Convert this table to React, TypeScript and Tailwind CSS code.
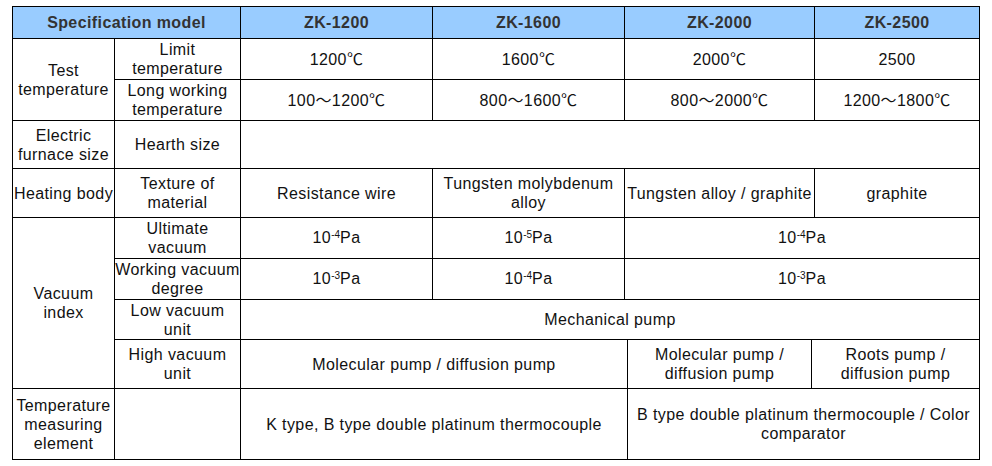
const cell = "border border-black p-0 text-center align-middle"

function Sup({ n }: { n: string }) {
  return (
    <>
      10<span className="relative -top-[5px] text-[10px] tracking-normal">{n}</span>Pa
    </>
  )
}

export default function App() {
  return (
    <div className="h-[466px] w-[992px] bg-white pt-[6px] pl-[12px] font-['Liberation_Sans','Noto_Sans_CJK_SC',sans-serif] text-[16px] leading-[19px] tracking-[0.4px] text-[#111]">
      <table className="table-fixed border-collapse" style={{ width: 967 }}>
        <colgroup>
          <col style={{ width: 102 }} />
          <col style={{ width: 126 }} />
          <col style={{ width: 192 }} />
          <col style={{ width: 192 }} />
          <col style={{ width: 3 }} />
          <col style={{ width: 184 }} />
          <col style={{ width: 3 }} />
          <col style={{ width: 165 }} />
        </colgroup>
        <tbody>
          <tr className="h-[32px] bg-[#99ccff] font-bold text-[#333]">
            <td colSpan={2} className={cell}>Specification model</td>
            <td className={cell}>ZK-1200</td>
            <td className={cell}>ZK-1600</td>
            <td colSpan={3} className={cell}>ZK-2000</td>
            <td className={cell}>ZK-2500</td>
          </tr>
          <tr className="h-[41px]">
            <td rowSpan={2} className={cell}>Test<br />temperature</td>
            <td className={cell}>Limit<br />temperature</td>
            <td className={cell}>1200℃</td>
            <td className={cell}>1600℃</td>
            <td colSpan={3} className={cell}>2000℃</td>
            <td className={cell}>2500</td>
          </tr>
          <tr className="h-[41px]">
            <td className={cell}>Long working<br />temperature</td>
            <td className={cell}>100～1200℃</td>
            <td className={cell}>800～1600℃</td>
            <td colSpan={3} className={cell}>800～2000℃</td>
            <td className={cell}>1200～1800℃</td>
          </tr>
          <tr className="h-[48px]">
            <td className={cell}>Electric<br />furnace size</td>
            <td className={cell}>Hearth size</td>
            <td colSpan={6} className={cell}></td>
          </tr>
          <tr className="h-[49px]">
            <td className={cell}>Heating body</td>
            <td className={cell}>Texture of<br />material</td>
            <td className={cell}>Resistance wire</td>
            <td className={cell}>Tungsten molybdenum<br />alloy</td>
            <td colSpan={3} className={cell}>Tungsten alloy / graphite</td>
            <td className={cell}>graphite</td>
          </tr>
          <tr className="h-[41px]">
            <td rowSpan={4} className={cell}>Vacuum<br />index</td>
            <td className={cell}>Ultimate<br />vacuum</td>
            <td className={cell}><Sup n="-4" /></td>
            <td className={cell}><Sup n="-5" /></td>
            <td colSpan={4} className={cell}><Sup n="-4" /></td>
          </tr>
          <tr className="h-[41px]">
            <td className={cell}>Working vacuum<br />degree</td>
            <td className={cell}><Sup n="-3" /></td>
            <td className={cell}><Sup n="-4" /></td>
            <td colSpan={4} className={cell}><Sup n="-3" /></td>
          </tr>
          <tr className="h-[40px]">
            <td className={cell}>Low vacuum<br />unit</td>
            <td colSpan={6} className={cell}>Mechanical pump</td>
          </tr>
          <tr className="h-[49px]">
            <td className={cell}>High vacuum<br />unit</td>
            <td colSpan={3} className={cell}>Molecular pump / diffusion pump</td>
            <td className={cell}>Molecular pump /<br />diffusion pump</td>
            <td colSpan={2} className={cell}>Roots pump /<br />diffusion pump</td>
          </tr>
          <tr className="h-[71px]">
            <td className={cell}>Temperature<br />measuring<br />element</td>
            <td className={cell}></td>
            <td colSpan={3} className={cell}>K type, B type double platinum thermocouple</td>
            <td colSpan={3} className={cell}>B type double platinum thermocouple / Color<br />comparator</td>
          </tr>
        </tbody>
      </table>
    </div>
  )
}
